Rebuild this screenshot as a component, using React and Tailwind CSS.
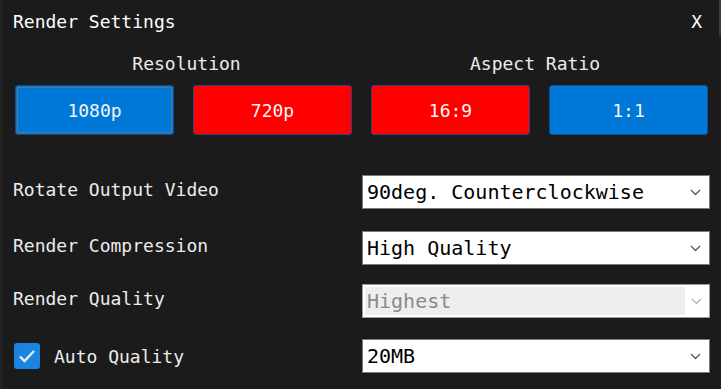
import React from 'react'

const font = { fontFamily: '"DejaVu Sans Mono", "Liberation Mono", monospace' }

function Chevron({ color = '#555' }) {
  return (
    <svg width="11" height="7" viewBox="0 0 11 7" fill="none">
      <path d="M1 1l4.5 4.5L10 1" stroke={color} strokeWidth="1.3" />
    </svg>
  )
}

function Select({ value, disabled }) {
  if (disabled) {
    return (
      <div className="w-[348px] h-[34px] border border-[#9a9a9a] bg-white flex items-center p-[2px] text-[20px]">
        <div className="flex-1 h-full bg-[#eeeeee] flex items-center pl-[2px] text-[#8a8a8a]">{value}</div>
        <div className="w-[22px] flex justify-center">
          <Chevron color="#b5b5b5" />
        </div>
      </div>
    )
  }
  return (
    <div className="w-[348px] h-[34px] border border-[#7a7a7a] bg-white flex items-center justify-between pl-[4px] pr-[8px] text-black text-[20px]">
      <span>{value}</span>
      <Chevron />
    </div>
  )
}

function App() {
  const rows = [
    { label: 'Rotate Output Video', value: '90deg. Counterclockwise', mt: 'mt-[40px]' },
    { label: 'Render Compression', value: 'High Quality', mt: 'mt-[22px]' },
    { label: 'Render Quality', value: 'Highest', disabled: true, mt: 'mt-[19px]' },
    { label: 'Auto Quality', value: '20MB', check: true, mt: 'mt-[21px]' },
  ]

  return (
    <div className="w-[721px] h-[389px] bg-[#1b1b1b] text-[18px] text-[#ececec] overflow-hidden border-l-2 border-[#222222] relative" style={font}>
      <div className="absolute right-0 top-0 w-[2px] h-[36px] bg-[#3a3a3a]" />
      <div className="flex justify-between items-center pl-[11px] pr-[19px] pt-[10px] h-[34px] leading-[24px]">
        <span className="text-white">Render Settings</span>
        <span className="text-white">X</span>
      </div>

      <div className="flex pl-[11px] mt-[18px] leading-[24px]">
        <div className="w-[347px] text-center">Resolution</div>
        <div className="w-[350px] text-center">Aspect Ratio</div>
      </div>

      <div className="grid grid-cols-4 gap-[19px] pl-[13px] pr-[13px] mt-[9px]">
        <button className="h-[50px] rounded-[3px] bg-[#0078d7] border border-[#0d4f91] text-[#f4f4f4] outline-dotted outline-1 outline-[#b0763a] outline-offset-[-3px]">1080p</button>
        <button className="h-[50px] rounded-[3px] bg-[#ff0000] border border-[#3a3f78] text-[#f8f8f8]">720p</button>
        <button className="h-[50px] rounded-[3px] bg-[#ff0000] border border-[#3a3f78] text-[#f8f8f8]">16:9</button>
        <button className="h-[50px] rounded-[3px] bg-[#0078d7] border border-[#0d4f91] text-[#f4f4f4]">1:1</button>
      </div>

      {rows.map((r) => (
        <div key={r.label} className={`flex items-center justify-between pl-[11px] pr-[11px] ${r.mt}`}>
          <div className="flex items-center">
            {r.check && (
              <div className="w-[26px] h-[26px] rounded-[3px] bg-[#1a84de] flex items-center justify-center mr-[14px] ml-[1px]">
                <svg width="18" height="14" viewBox="0 0 18 14" fill="none">
                  <path d="M2 7.5l4.5 4.5L16 2" stroke="#e8eef5" strokeWidth="2.4" />
                </svg>
              </div>
            )}
            <span className={r.check ? '' : 'pb-[6px]'}>{r.label}</span>
          </div>
          <Select value={r.value} disabled={r.disabled} />
        </div>
      ))}
    </div>
  )
}

export default App
